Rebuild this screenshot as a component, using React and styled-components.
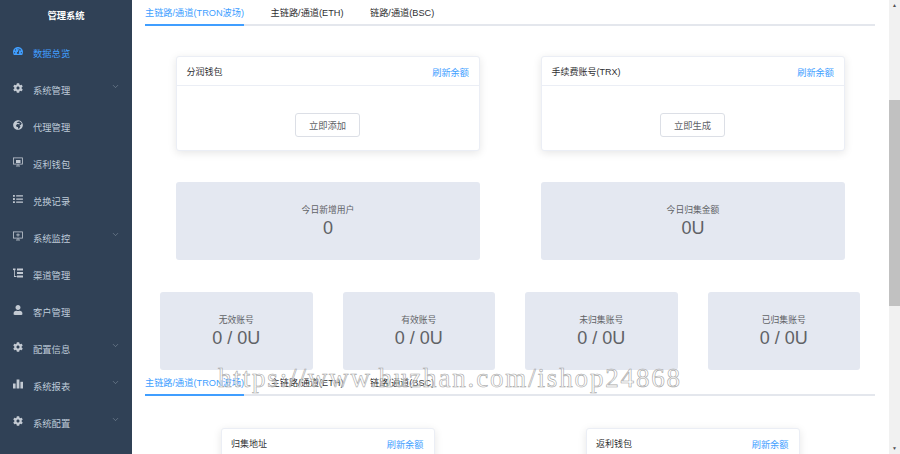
import styled, { createGlobalStyle } from "styled-components";
import { FaCog, FaGlobeAfrica, FaList, FaUser, FaTachometerAlt } from "react-icons/fa";
import { ChevronDown } from "lucide-react";

const TreeIcon = () => (
  <svg width="10" height="10" viewBox="0 0 10 10" fill="currentColor">
    <rect x="0" y="0.5" width="2.5" height="1.6" />
    <rect x="1" y="2" width="0.8" height="7" />
    <rect x="1" y="8" width="2.5" height="1" />
    <rect x="4" y="0.5" width="6" height="2" />
    <rect x="4" y="4" width="6" height="2" />
    <rect x="4" y="7.5" width="6" height="2" />
  </svg>
);

const ScreenIcon = ({ filled }) => (
  <svg width="10" height="10" viewBox="0 0 10 10" fill="none" stroke="currentColor" strokeWidth="0.8">
    <rect x="0.4" y="0.9" width="9.2" height="6.2" />
    {filled ? (
      <rect x="3" y="3" width="4.5" height="3" fill="currentColor" stroke="none" />
    ) : (
      <path d="M3.2 3.9h3.6M5 2.4v3.2" />
    )}
    <path d="M5 7.1v1.6M3 9h4" />
  </svg>
);

const BarsIcon = () => (
  <svg width="10" height="10" viewBox="0 0 10 10" fill="currentColor">
    <rect x="0" y="4.5" width="2.6" height="5" />
    <rect x="3.6" y="0.5" width="2.8" height="9" />
    <rect x="7.4" y="2.8" width="2.6" height="6.7" />
  </svg>
);

const menu = [
  { name: "数据总览", icon: <FaTachometerAlt size={10} />, active: true },
  { name: "系统管理", icon: <FaCog size={10} />, arrow: true },
  { name: "代理管理", icon: <FaGlobeAfrica size={10} /> },
  { name: "返利钱包", icon: <ScreenIcon filled /> },
  { name: "兑换记录", icon: <FaList size={10} /> },
  { name: "系统监控", icon: <ScreenIcon />, arrow: true },
  { name: "渠道管理", icon: <TreeIcon /> },
  { name: "客户管理", icon: <FaUser size={10} /> },
  { name: "配置信息", icon: <FaCog size={10} />, arrow: true },
  { name: "系统报表", icon: <BarsIcon />, arrow: true },
  { name: "系统配置", icon: <FaCog size={10} />, arrow: true },
];

const tabs = ["主链路/通道(TRON波场)", "主链路/通道(ETH)", "链路/通道(BSC)"];

function Tabs() {
  return (
    <TabBar>
      {tabs.map((t, i) => (
        <Tab key={t} $active={i === 0}>
          {t}
        </Tab>
      ))}
    </TabBar>
  );
}

function Wallet({ title, action }) {
  return (
    <Card>
      <CardHead>
        <span>{title}</span>
        <Refresh>刷新余额</Refresh>
      </CardHead>
      <CardBody>
        <Button>{action}</Button>
      </CardBody>
    </Card>
  );
}

function Stat({ label, value }) {
  return (
    <StatBox>
      <StatLabel>{label}</StatLabel>
      <StatValue>{value}</StatValue>
    </StatBox>
  );
}

export default function App() {
  return (
    <Page>
      <GlobalStyle />
      <Sidebar>
        <Logo>管理系统</Logo>
        {menu.map((m) => (
          <MenuItem key={m.name} $active={m.active}>
            <MenuIcon $active={m.active}>{m.icon}</MenuIcon>
            <span>{m.name}</span>
            {m.arrow && (
              <Arrow>
                <ChevronDown size={9} strokeWidth={1.2} />
              </Arrow>
            )}
          </MenuItem>
        ))}
      </Sidebar>
      <Main>
        <Tabs />
        <WalletRow>
          <Wallet title="分润钱包" action="立即添加" />
          <Wallet title="手续费账号(TRX)" action="立即生成" />
        </WalletRow>
        <BigStats>
          <Stat label="今日新增用户" value="0" />
          <Stat label="今日归集金额" value="0U" />
        </BigStats>
        <SmallStats>
          <Stat label="无效账号" value="0 / 0U" />
          <Stat label="有效账号" value="0 / 0U" />
          <Stat label="未归集账号" value="0 / 0U" />
          <Stat label="已归集账号" value="0 / 0U" />
        </SmallStats>
        <Tabs />
        <NarrowRow>
          <NarrowCard>
            <CardHead>
              <span>归集地址</span>
              <Refresh>刷新余额</Refresh>
            </CardHead>
          </NarrowCard>
          <NarrowCard>
            <CardHead>
              <span>返利钱包</span>
              <Refresh>刷新余额</Refresh>
            </CardHead>
          </NarrowCard>
        </NarrowRow>
      </Main>
      <Scrollbar>
        <ScrollArrow>▲</ScrollArrow>
        <ScrollTrack>
          <ScrollThumb />
        </ScrollTrack>
        <ScrollArrow>▼</ScrollArrow>
      </Scrollbar>
      <Watermark>https://www.huzhan.com/ishop24868</Watermark>
    </Page>
  );
}

const GlobalStyle = createGlobalStyle`
  html, body {
    margin: 0;
    height: 100%;
    overflow: hidden;
    background: #fff;
    font-family: "Liberation Sans", "Noto Sans CJK SC", sans-serif;
  }
`;

const Page = styled.div`
  position: relative;
  display: flex;
  width: 900px;
  height: 454px;
  overflow: hidden;
`;

const Sidebar = styled.aside`
  flex: 0 0 132px;
  background: #304156;
`;

const Logo = styled.div`
  height: 34px;
  line-height: 33px;
  text-align: center;
  font-size: 9.3px;
  font-weight: 700;
  color: #fff;
`;

const MenuItem = styled.div`
  position: relative;
  display: flex;
  align-items: center;
  height: 37px;
  padding-left: 13px;
  font-size: 9.3px;
  color: ${(p) => (p.$active ? "#409eff" : "#bfcbd9")};
`;

const MenuIcon = styled.span`
  display: flex;
  justify-content: center;
  width: 10px;
  margin-right: 10px;
  margin-top: -3px;
  color: ${(p) => (p.$active ? "#409eff" : "#c3cad3")};
`;

const Arrow = styled.span`
  position: absolute;
  right: 12px;
  top: 11px;
  color: #9aa7b6;
`;

const Main = styled.main`
  flex: 1;
  min-width: 0;
  padding: 0 14px 0 13px;
`;

const TabBar = styled.div`
  display: flex;
  height: 26px;
  box-sizing: border-box;
  border-bottom: 2px solid #e4e7ed;
`;

const Tab = styled.div`
  height: 26px;
  box-sizing: border-box;
  margin-right: 26.5px;
  padding-top: 6px;
  font-size: 9.2px;
  line-height: 14px;
  color: ${(p) => (p.$active ? "#409eff" : "#303133")};
  border-bottom: 2px solid ${(p) => (p.$active ? "#409eff" : "transparent")};
`;

const WalletRow = styled.div`
  display: grid;
  grid-template-columns: 1fr 1fr;
  padding-top: 30px;
`;

const Card = styled.section`
  margin: 0 30px 0 31px;
  height: 95px;
  box-sizing: border-box;
  background: #fff;
  border: 1px solid #ebeef5;
  border-radius: 3px;
  box-shadow: 0 2px 9px rgba(0, 0, 0, 0.1);
`;

const CardHead = styled.div`
  display: flex;
  justify-content: space-between;
  align-items: center;
  height: 28px;
  padding: 0 10px 0 9.5px;
  border-bottom: 1px solid #ebeef5;
  font-size: 9px;
  color: #303133;
`;

const Refresh = styled.span`
  color: #409eff;
  font-size: 9.2px;
  margin-top: 2px;
`;

const CardBody = styled.div`
  display: flex;
  justify-content: center;
  padding: 27px 1px 0 0;
`;

const Button = styled.button`
  width: 65px;
  height: 24px;
  padding: 0;
  background: #fff;
  border: 1px solid #dcdfe6;
  border-radius: 3px;
  font: inherit;
  font-size: 9.3px;
  color: #606266;
`;

const BigStats = styled.div`
  display: grid;
  grid-template-columns: 304px 304px;
  justify-content: space-between;
  padding: 31px 30px 0 31px;
`;

const SmallStats = styled.div`
  display: grid;
  grid-template-columns: repeat(4, 1fr);
  gap: 30px;
  padding: 32px 15px 0;
`;

const StatBox = styled.div`
  display: flex;
  flex-direction: column;
  align-items: center;
  justify-content: center;
  height: 78px;
  padding-bottom: 1px;
  box-sizing: border-box;
  background: #e4e8f1;
  border-radius: 3px;
  color: #606266;
`;

const StatLabel = styled.div`
  font-size: 8.8px;
  line-height: 14px;
`;

const StatValue = styled.div`
  font-size: 18px;
  line-height: 22px;
`;

const NarrowRow = styled.div`
  display: grid;
  grid-template-columns: 1fr 1fr;
  justify-items: center;
  padding-top: 32px;
`;

const NarrowCard = styled.section`
  width: 212px;
  height: 60px;
  background: #fff;
  border: 1px solid #ebeef5;
  border-radius: 3px;
  box-shadow: 0 2px 9px rgba(0, 0, 0, 0.1);
`;

const Scrollbar = styled.div`
  flex: 0 0 11px;
  display: flex;
  flex-direction: column;
  background: #f1f1f1;
`;

const ScrollArrow = styled.div`
  height: 11px;
  line-height: 11px;
  text-align: center;
  font-size: 5px;
  color: #505050;
`;

const ScrollTrack = styled.div`
  flex: 1;
  padding-top: 89px;
`;

const ScrollThumb = styled.div`
  height: 206px;
  background: #c1c1c1;
`;

const Watermark = styled.div`
  position: absolute;
  left: 218px;
  top: 361px;
  font-family: "Liberation Serif", serif;
  font-size: 27px;
  line-height: 34px;
  letter-spacing: 1.84px;
  white-space: nowrap;
  color: rgba(255, 255, 255, 0.55);
  -webkit-text-stroke: 0.6px #a6a6a6;
  pointer-events: none;
`;
